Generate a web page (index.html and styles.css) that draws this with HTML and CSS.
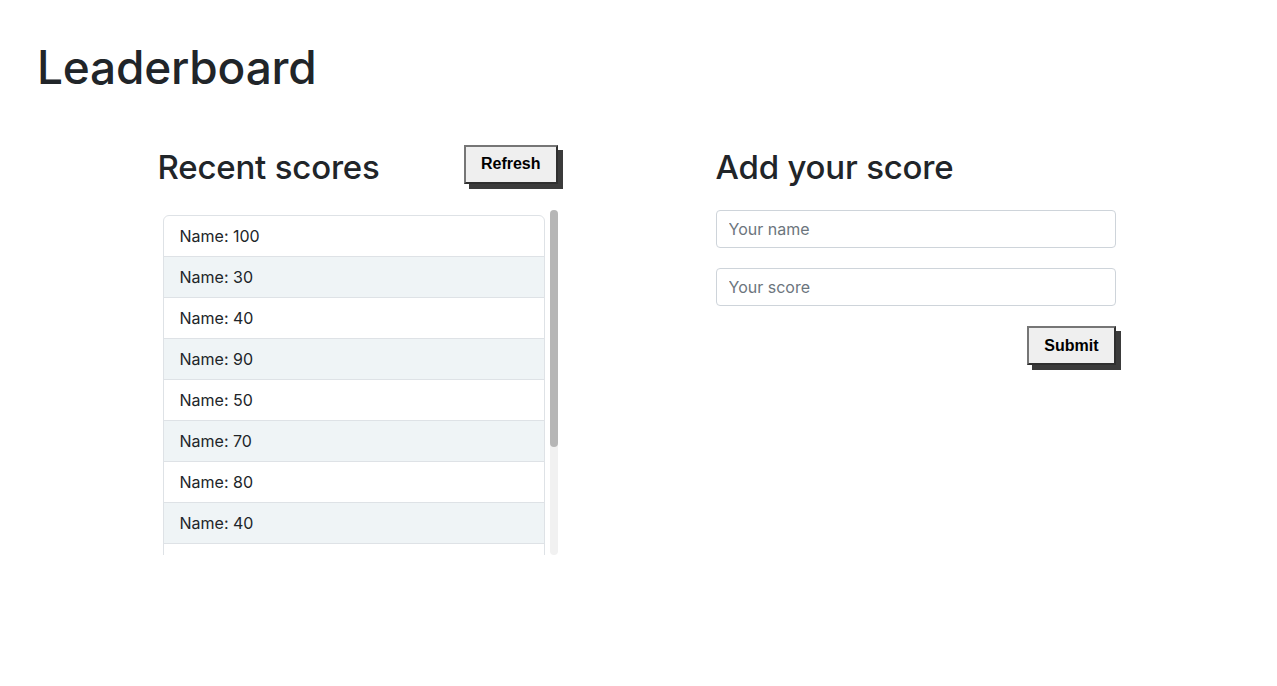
FILE: index.html
```html
<!DOCTYPE html>
<html lang="en">
<head>
<meta charset="utf-8">
<title>Leaderboard</title>
<link rel="stylesheet" href="styles.css">
</head>
<body>
<div class="page">
  <h1 class="title">Leaderboard</h1>
  <div class="columns">
    <section class="col">
      <div class="col-head">
        <h2 class="heading">Recent scores</h2>
        <button class="btn" type="button">Refresh</button>
      </div>
      <div class="scroll-wrap">
        <div class="scroller">
          <ul class="list">
            <li class="item">Name: 100</li>
            <li class="item">Name: 30</li>
            <li class="item">Name: 40</li>
            <li class="item">Name: 90</li>
            <li class="item">Name: 50</li>
            <li class="item">Name: 70</li>
            <li class="item">Name: 80</li>
            <li class="item">Name: 40</li>
            <li class="item">Name: 60</li>
            <li class="item">Name: 20</li>
            <li class="item">Name: 10</li>
            <li class="item">Name: 50</li>
          </ul>
        </div>
        <div class="track"><div class="thumb"></div></div>
      </div>
    </section>
    <section class="col">
      <div class="col-head">
        <h2 class="heading">Add your score</h2>
      </div>
      <form class="form">
        <input class="input" type="text" placeholder="Your name">
        <input class="input" type="text" placeholder="Your score">
        <div class="actions">
          <button class="btn" type="button">Submit</button>
        </div>
      </form>
    </section>
  </div>
</div>
</body>
</html>
```
FILE: styles.css
```css
* { box-sizing: border-box; }
html, body { margin: 0; padding: 0; background: #fff; }
body {
  font-family: Inter, "Noto Sans", "Liberation Sans", sans-serif;
  color: #212529;
  font-size: 16px;
  line-height: 1.5;
}
.page { padding: 40px 0 0 0; }
.title {
  margin: 0 0 0 37px;
  font-size: 46px;
  font-weight: 500;
  line-height: 1.2;
  letter-spacing: -0.2px;
}
.columns {
  display: flex;
  justify-content: center;
  gap: 158px;
  margin-top: 47px;
  padding-right: 4px;
}
.col { width: 400px; }
.col-head {
  display: flex;
  align-items: center;
  justify-content: space-between;
  height: 48px;
  margin-bottom: 20px;
}
.heading {
  margin: 0;
  padding-top: 2px;
  font-size: 33px;
  font-weight: 500;
  line-height: 46px;
  letter-spacing: -0.2px;
}
.btn {
  font-family: "Liberation Sans", Arial, sans-serif;
  font-weight: 700;
  font-size: 16px;
  color: #000;
  background: #efefef;
  border: 2px solid;
  border-color: #767676 #2f2f2f #2f2f2f #767676;
  box-shadow: 5px 5px 0 #3b3b3b;
  height: 39px;
  padding: 0 15px;
  margin: 0 0 4px 0;
  cursor: pointer;
}
.scroll-wrap {
  display: flex;
  height: 345px;
}
.scroller {
  flex: 1;
  overflow: hidden;
  padding: 5px;
}
.track {
  width: 8px;
  height: 100%;
  background: #f1f1f1;
  border-radius: 4px;
}
.thumb {
  height: 237px;
  background: #b6b6b6;
  border-radius: 4px;
}
.list {
  list-style: none;
  margin: 0;
  padding: 0;
  border: 1px solid #dee2e6;
  border-radius: 6px;
}
.item {
  padding: 8px 16px;
  border-bottom: 1px solid #dee2e6;
  line-height: 24px;
}
.item:last-child { border-bottom: 0; }
.item:nth-child(even) { background: #eff4f6; }
.form { display: flex; flex-direction: column; gap: 20px; }
.input {
  width: 400px;
  height: 38px;
  padding: 6px 12px;
  font-family: Inter, "Noto Sans", sans-serif;
  font-size: 16px;
  color: #212529;
  border: 1px solid #ced4da;
  border-radius: 4px;
  background: #fff;
}
.input::placeholder { color: #6c757d; }
.actions { display: flex; justify-content: flex-end; }
```
